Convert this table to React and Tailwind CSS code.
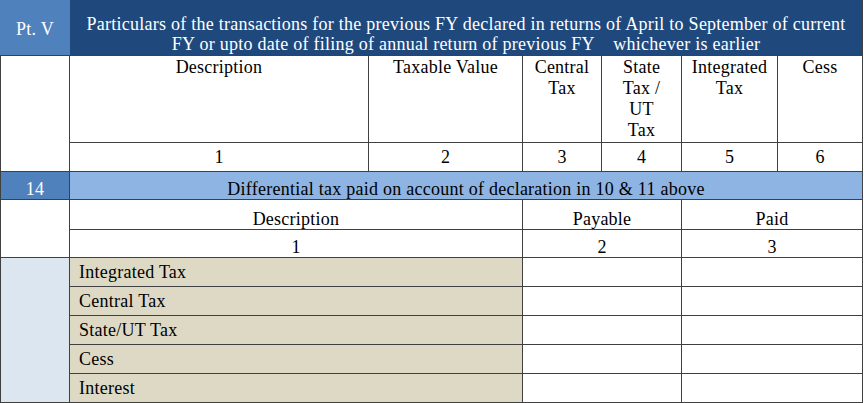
export default function App() {
  const border = "border-[#404040]";
  const cell = `border-r border-b ${border}`;
  const low = "flex items-end justify-center leading-[20px]";
  const taxRows = ["Integrated Tax", "Central Tax", "State/UT Tax", "Cess", "Interest"];

  return (
    <div
      className="w-[864px] h-[403px] bg-white text-black text-[18px] tracking-[0.25px] overflow-hidden"
      style={{ fontFamily: '"Liberation Serif", "Times New Roman", serif' }}
    >
      <div className="grid grid-cols-[70px_299px_154px_79px_80px_96px_85px] grid-rows-[56px_87px_29px_28px_30px_28px_29px_29px_29px_29px_29px]">
        {/* Part header */}
        <div className={`border-b ${border} bg-[#4f81bd] text-white flex items-center justify-center pt-[4px]`}>
          Pt. V
        </div>
        <div className={`col-span-6 ${cell} bg-[#1f497d] text-white flex items-start justify-center text-center leading-[20px] pt-[14px]`}>
          <p className="whitespace-pre">
            Particulars of the transactions for the previous FY declared in returns of April to September of current
            <br />
            {"FY or upto date of filing of annual return of previous FY    whichever is earlier"}
          </p>
        </div>

        {/* Left spacer for table header */}
        <div className={`row-span-2 border-l border-r border-b ${border}`}></div>

        {/* Column headers */}
        {[
          ["Description"],
          ["Taxable Value"],
          ["Central", "Tax"],
          ["State", "Tax /", "UT", "Tax"],
          ["Integrated", "Tax"],
          ["Cess"],
        ].map((lines, i) => (
          <div key={i} className={`${cell} text-center pt-[1px] leading-[21px]`}>
            {lines.map((l) => (
              <div key={l}>{l}</div>
            ))}
          </div>
        ))}

        {/* Column numbers */}
        {[1, 2, 3, 4, 5, 6].map((n) => (
          <div key={n} className={`${cell} flex items-center justify-center`}>
            {n}
          </div>
        ))}

        {/* Row 14 */}
        <div className={`border-l border-r border-b ${border} bg-[#4f81bd] text-white ${low}`}>
          14
        </div>
        <div className={`col-span-6 ${cell} bg-[#8db4e2] ${low}`}>
          Differential tax paid on account of declaration in 10 &amp; 11 above
        </div>

        {/* Left spacer for sub-table header */}
        <div className={`row-span-2 border-l border-r border-b ${border}`}></div>

        <div className={`col-span-2 ${cell} ${low}`}>Description</div>
        <div className={`col-span-2 ${cell} ${low}`}>Payable</div>
        <div className={`col-span-2 ${cell} ${low}`}>Paid</div>

        <div className={`col-span-2 ${cell} ${low}`}>1</div>
        <div className={`col-span-2 ${cell} ${low}`}>2</div>
        <div className={`col-span-2 ${cell} ${low}`}>3</div>

        {/* Tax rows */}
        <div className={`row-span-5 border-l border-r border-b ${border} bg-[#dce6f1]`}></div>
        {taxRows.map((label) => (
          <div key={label} className="contents">
            <div className={`col-span-2 ${cell} bg-[#ddd9c4] flex items-center pl-[9px]`}>{label}</div>
            <div className={`col-span-2 ${cell}`}></div>
            <div className={`col-span-2 ${cell}`}></div>
          </div>
        ))}
      </div>
    </div>
  );
}
